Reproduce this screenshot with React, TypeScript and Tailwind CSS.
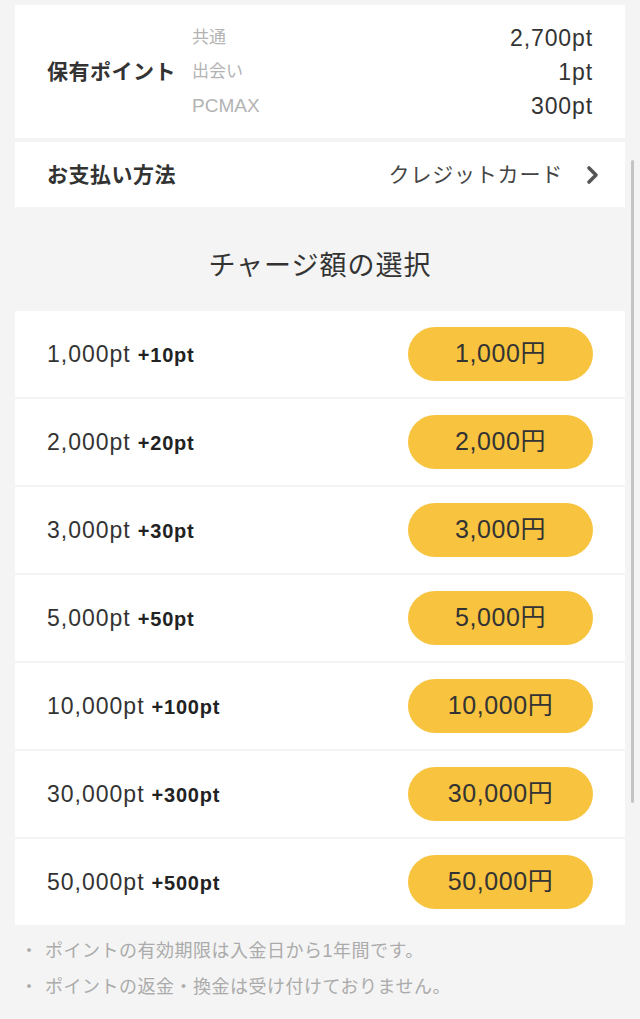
import React from "react";

const rows = [
  { pt: "1,000pt", bonus: "+10pt", price: "1,000円" },
  { pt: "2,000pt", bonus: "+20pt", price: "2,000円" },
  { pt: "3,000pt", bonus: "+30pt", price: "3,000円" },
  { pt: "5,000pt", bonus: "+50pt", price: "5,000円" },
  { pt: "10,000pt", bonus: "+100pt", price: "10,000円" },
  { pt: "30,000pt", bonus: "+300pt", price: "30,000円" },
  { pt: "50,000pt", bonus: "+500pt", price: "50,000円" },
];

const font = "font-['Liberation_Sans','Noto_Sans_CJK_JP',sans-serif]";

export default function App() {
  return (
    <div className={`relative min-h-[1019px] w-[640px] bg-[#f4f4f4] pt-[5px] pb-[14px] text-[#333] ${font}`}>
      {/* scrollbar overlay */}
      <div className="absolute left-[631px] top-[160px] h-[643px] w-[3px] rounded-full bg-[#c4c4c4]" />

      <div className="mx-[15px] w-[610px]">
        {/* held points */}
        <div className="flex items-center bg-white pl-[32px] pr-[32px] pt-[16px] pb-[15px]">
          <div className="w-[145px] text-[21px] font-bold tracking-[0.5px]">保有ポイント</div>
          <div className="flex-1">
            <div className="flex h-[34px] items-center justify-between">
              <span className="text-[17px] text-[#b3b3b3]">共通</span>
              <span className="text-[23px] tracking-[0.9px]">2,700pt</span>
            </div>
            <div className="flex h-[34px] items-center justify-between">
              <span className="text-[17px] text-[#b3b3b3]">出会い</span>
              <span className="text-[23px] tracking-[0.9px]">1pt</span>
            </div>
            <div className="flex h-[34px] items-center justify-between">
              <span className="text-[19px] text-[#b3b3b3]">PCMAX</span>
              <span className="text-[23px] tracking-[0.9px]">300pt</span>
            </div>
          </div>
        </div>

        {/* payment method */}
        <div className="mt-[4px] flex h-[65px] items-center justify-between bg-white pl-[32px] pr-[24px]">
          <span className="text-[21px] font-bold tracking-[0.5px]">お支払い方法</span>
          <div className="flex items-center gap-[22px]">
            <span className="text-[21px] text-[#444] tracking-[0.8px]">クレジットカード</span>
            <svg width="16" height="20" viewBox="0 0 16 20">
              <polyline points="4,3 11,10 4,17" fill="none" stroke="#555" strokeWidth="3.6" strokeLinecap="round" strokeLinejoin="round" />
            </svg>
          </div>
        </div>

        {/* title */}
        <div className="pt-[41px] pb-[27px] text-center text-[27px] leading-[36px] tracking-[1px] text-[#333]">
          チャージ額の選択
        </div>

        {/* rows */}
        <div className="flex flex-col gap-[2px]">
          {rows.map((r) => (
            <div key={r.pt} className="flex h-[86px] items-center justify-between bg-white pl-[32px] pr-[32px]">
              <div className="flex items-baseline">
                <span className="text-[23px] tracking-[1px] text-[#333]">{r.pt}</span>
                <span className="ml-[7px] text-[20px] font-bold tracking-[0.8px] text-[#222]">{r.bonus}</span>
              </div>
              <button className="flex h-[54px] w-[185px] items-center justify-center rounded-full bg-[#f8c33f] text-[25px] tracking-[0.6px] text-[#333]">
                {r.price}
              </button>
            </div>
          ))}
        </div>
      </div>

      {/* notes */}
      <div className="mt-[8px] pl-[20px] text-[18px] leading-[36px] tracking-[0.5px] text-[#ababab]">
        <div className="flex">
          <span className="w-[25px]">・</span>
          <span>ポイントの有効期限は入金日から1年間です。</span>
        </div>
        <div className="flex">
          <span className="w-[25px]">・</span>
          <span>ポイントの返金・換金は受け付けておりません。</span>
        </div>
      </div>
    </div>
  );
}
